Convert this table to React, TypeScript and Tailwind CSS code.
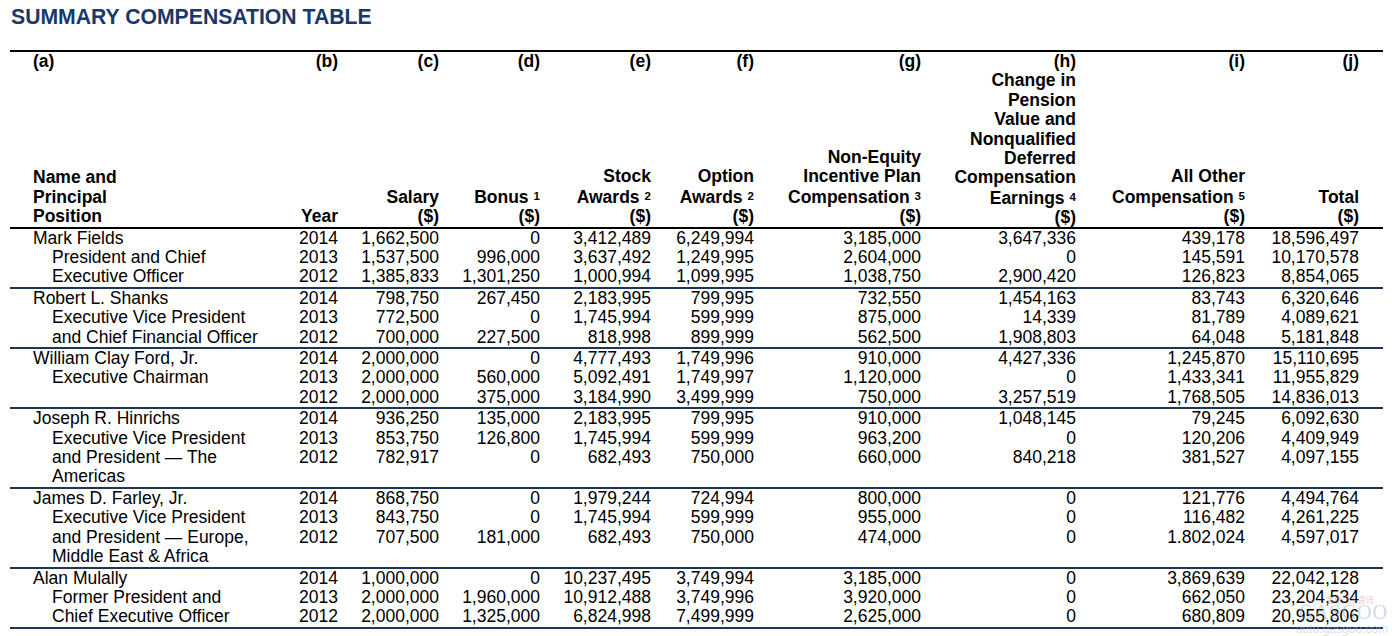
import React from "react";

type Group = { lines: string[]; rows: string[][] };

const groups: Group[] = [
  {
    lines: ["Mark Fields", "President and Chief", "Executive Officer"],
    rows: [
      ["2014", "1,662,500", "0", "3,412,489", "6,249,994", "3,185,000", "3,647,336", "439,178", "18,596,497"],
      ["2013", "1,537,500", "996,000", "3,637,492", "1,249,995", "2,604,000", "0", "145,591", "10,170,578"],
      ["2012", "1,385,833", "1,301,250", "1,000,994", "1,099,995", "1,038,750", "2,900,420", "126,823", "8,854,065"],
    ],
  },
  {
    lines: ["Robert L. Shanks", "Executive Vice President", "and Chief Financial Officer"],
    rows: [
      ["2014", "798,750", "267,450", "2,183,995", "799,995", "732,550", "1,454,163", "83,743", "6,320,646"],
      ["2013", "772,500", "0", "1,745,994", "599,999", "875,000", "14,339", "81,789", "4,089,621"],
      ["2012", "700,000", "227,500", "818,998", "899,999", "562,500", "1,908,803", "64,048", "5,181,848"],
    ],
  },
  {
    lines: ["William Clay Ford, Jr.", "Executive Chairman"],
    rows: [
      ["2014", "2,000,000", "0", "4,777,493", "1,749,996", "910,000", "4,427,336", "1,245,870", "15,110,695"],
      ["2013", "2,000,000", "560,000", "5,092,491", "1,749,997", "1,120,000", "0", "1,433,341", "11,955,829"],
      ["2012", "2,000,000", "375,000", "3,184,990", "3,499,999", "750,000", "3,257,519", "1,768,505", "14,836,013"],
    ],
  },
  {
    lines: ["Joseph R. Hinrichs", "Executive Vice President", "and President \u2014 The", "Americas"],
    rows: [
      ["2014", "936,250", "135,000", "2,183,995", "799,995", "910,000", "1,048,145", "79,245", "6,092,630"],
      ["2013", "853,750", "126,800", "1,745,994", "599,999", "963,200", "0", "120,206", "4,409,949"],
      ["2012", "782,917", "0", "682,493", "750,000", "660,000", "840,218", "381,527", "4,097,155"],
    ],
  },
  {
    lines: ["James D. Farley, Jr.", "Executive Vice President", "and President \u2014 Europe,", "Middle East & Africa"],
    rows: [
      ["2014", "868,750", "0", "1,979,244", "724,994", "800,000", "0", "121,776", "4,494,764"],
      ["2013", "843,750", "0", "1,745,994", "599,999", "955,000", "0", "116,482", "4,261,225"],
      ["2012", "707,500", "181,000", "682,493", "750,000", "474,000", "0", "1.802,024", "4,597,017"],
    ],
  },
  {
    lines: ["Alan Mulally", "Former President and", "Chief Executive Officer"],
    rows: [
      ["2014", "1,000,000", "0", "10,237,495", "3,749,994", "3,185,000", "0", "3,869,639", "22,042,128"],
      ["2013", "2,000,000", "1,960,000", "10,912,488", "3,749,996", "3,920,000", "0", "662,050", "23,204,534"],
      ["2012", "2,000,000", "1,325,000", "6,824,998", "7,499,999", "2,625,000", "0", "680,809", "20,955,806"],
    ],
  },
];

const GRID =
  "grid grid-cols-[270px_58px_101px_101px_111px_103px_167px_155px_169px_114px_24px]";

const Sup = ({ n }: { n: string }) => (
  <span className="text-[11.5px] align-[3px] ml-[5px]">{n}</span>
);

type HeadCol = { letter: string; lines: React.ReactNode[]; left?: boolean };

const headers: HeadCol[] = [
  { letter: "(a)", lines: ["Name and", "Principal", "Position"], left: true },
  { letter: "(b)", lines: ["Year"] },
  { letter: "(c)", lines: ["Salary", "($)"] },
  { letter: "(d)", lines: [<>Bonus<Sup n="1" /></>, "($)"] },
  { letter: "(e)", lines: ["Stock", <>Awards<Sup n="2" /></>, "($)"] },
  { letter: "(f)", lines: ["Option", <>Awards<Sup n="2" /></>, "($)"] },
  {
    letter: "(g)",
    lines: ["Non-Equity", "Incentive Plan", <>Compensation<Sup n="3" /></>, "($)"],
  },
  {
    letter: "(h)",
    lines: [
      "Change in",
      "Pension",
      "Value and",
      "Nonqualified",
      "Deferred",
      "Compensation",
      <>Earnings<Sup n="4" /></>,
      "($)",
    ],
  },
  { letter: "(i)", lines: ["All Other", <>Compensation<Sup n="5" /></>, "($)"] },
  { letter: "(j)", lines: ["Total", "($)"] },
];

export default function App() {
  return (
    <div className="relative w-[1392px] h-[636px] overflow-hidden bg-white font-['Liberation_Sans',Arial,sans-serif] text-black">
      <div className="pt-[5px] pl-[11px] h-[50px]">
        <h1 className="text-[21.2px] leading-[24px] font-bold text-[#1a386a]">
          SUMMARY COMPENSATION TABLE
        </h1>
      </div>

      <div className="ml-[10px] w-[1373px] text-[17.5px] leading-[19.4px]">
        {/* Header */}
        <div className={`${GRID} border-t-2 border-b-2 border-black font-bold`}>
          {headers.map((h, i) => (
            <div
              key={i}
              className={`flex flex-col justify-between h-[174.6px] ${
                h.left ? "pl-[23px] text-left" : "text-right"
              }`}
            >
              <div>{h.letter}</div>
              <div>
                {h.lines.map((l, j) => (
                  <div key={j} className="whitespace-nowrap">
                    {l}
                  </div>
                ))}
              </div>
            </div>
          ))}
          <div />
        </div>

        {/* Body */}
        {groups.map((g, gi) => (
          <div key={gi} className={`${GRID} border-b-2 border-[#1b3659]`}>
            <div className="flex flex-col">
              {g.lines.map((l, li) => (
                <div
                  key={li}
                  className={`whitespace-nowrap ${li === 0 ? "pl-[23px]" : "pl-[42px]"}`}
                >
                  {l}
                </div>
              ))}
            </div>
            {Array.from({ length: 9 }).map((_, ci) => (
              <div key={ci} className="flex flex-col text-right">
                {g.rows.map((r, ri) => (
                  <div key={ri} className="whitespace-nowrap">
                    {r[ci]}
                  </div>
                ))}
              </div>
            ))}
            <div />
          </div>
        ))}
      </div>

      {/* watermark */}
      <div className="absolute right-[4px] bottom-[1px] flex flex-col items-end leading-none opacity-50 pointer-events-none">
        <div className="text-[8px] text-[#d08a8a] mr-[14px] font-['Noto_Sans_CJK_SC',sans-serif]">
          盖世汽车资讯
        </div>
        <div className="text-[20px] tracking-[1px] text-[#9fb3cf] font-['Liberation_Serif',serif] -mt-[2px]">
          GASGOO
        </div>
        <div className="text-[12px] text-[#b9c3d2] mt-[1px]">auto.gasgoo.com</div>
      </div>
    </div>
  );
}
